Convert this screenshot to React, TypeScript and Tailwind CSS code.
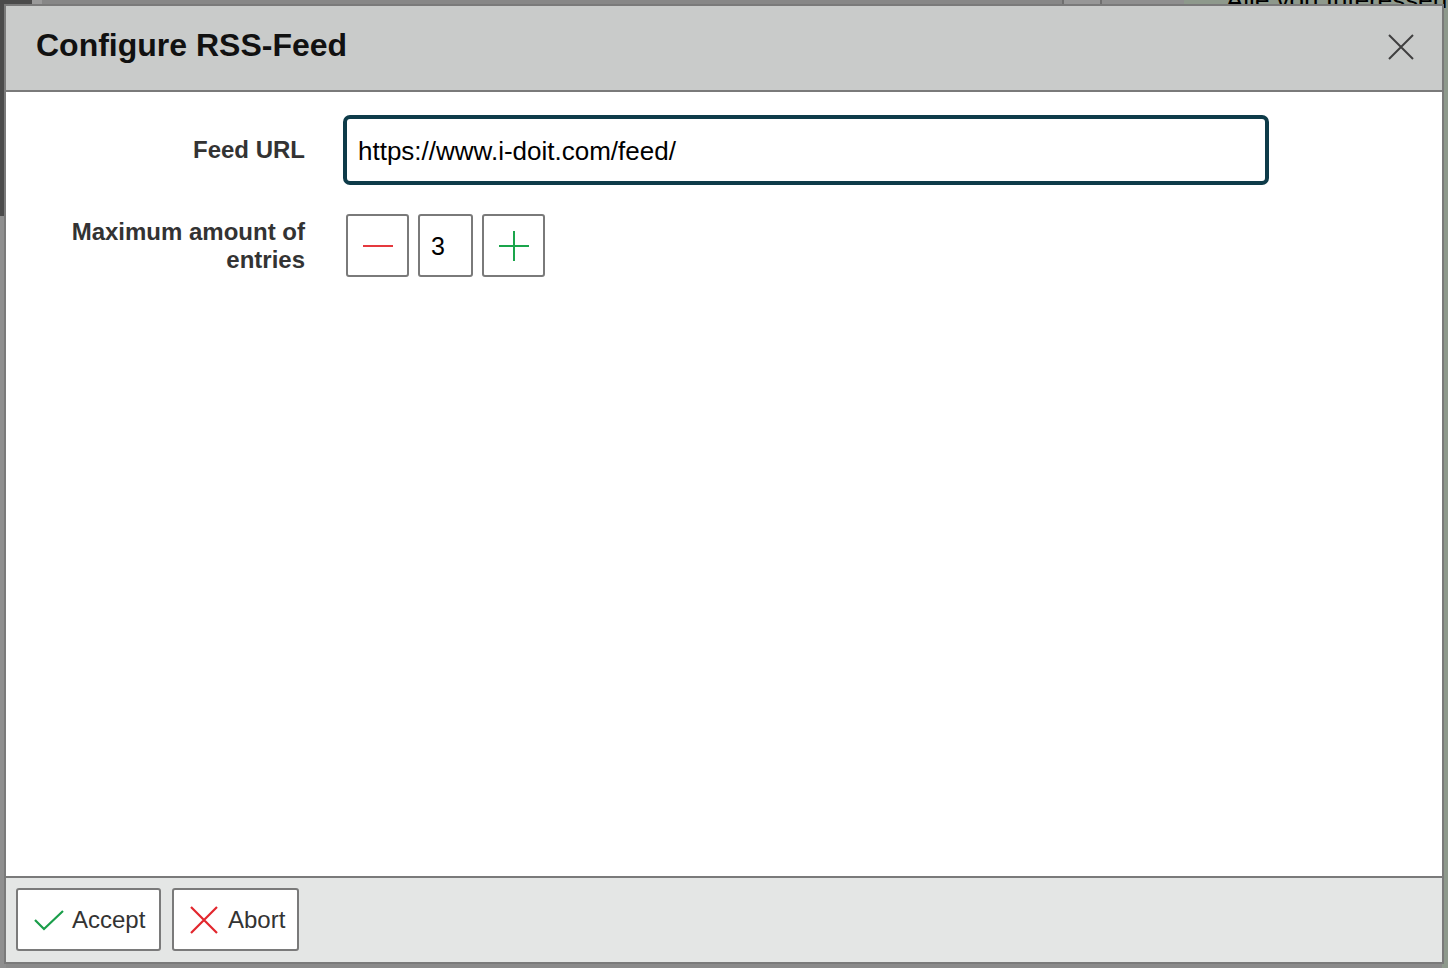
import React from "react";

function CloseIcon() {
  return (
    <svg width="26" height="26" viewBox="0 0 26 26" fill="none">
      <path d="M1 1 L25 25 M25 1 L1 25" stroke="#3f3f3f" strokeWidth="2" />
    </svg>
  );
}

function CheckIcon() {
  return (
    <svg width="30" height="22" viewBox="0 0 30 22" fill="none">
      <path d="M1 11 L10 20 L29 2" stroke="#1a9e4a" strokeWidth="2.2" />
    </svg>
  );
}

function CrossIcon() {
  return (
    <svg width="28" height="28" viewBox="0 0 28 28" fill="none">
      <path d="M1 1 L27 27 M27 1 L1 27" stroke="#e2262d" strokeWidth="2.2" />
    </svg>
  );
}

function Backdrop() {
  // page behind the dialog, dimmed
  return (
    <div className="absolute inset-0 flex flex-col bg-[#8a8a8a]">
      <div className="flex h-[8px]">
        <div className="w-[32px] bg-[#4b4b4b]" />
        <div className="w-[10px] bg-[#9a9a9a]" />
        <div className="w-[1020px] bg-[#878787]" />
        <div className="w-[40px] border-x-2 border-[#6f6f6f] bg-[#979797]" />
        <div className="w-[82px] bg-[#8f8f8f]" />
        <div className="flex-1 bg-[#8e998c] overflow-hidden pl-[42px]">
          <div className="text-[26px] leading-[20px] -mt-[10px] whitespace-nowrap text-black">
            Alle von Interessen
          </div>
        </div>
      </div>
      <div className="flex flex-1">
        <div className="w-[6px] flex flex-col">
          <div className="h-[208px] bg-[#4b4b4b]" />
          <div className="flex-1 bg-[#8f8f8f]" />
        </div>
        <div className="flex-1" />
        <div className="w-[6px] bg-[#8e998c]" />
      </div>
    </div>
  );
}

export default function App() {
  return (
    <div className="relative w-[1448px] h-[968px] overflow-hidden font-['Liberation_Sans',Arial,sans-serif]">
      <Backdrop />
      <div className="absolute left-[4px] top-[4px] w-[1440px] h-[960px] border-2 border-[#7a7a7a] bg-white flex flex-col">
        {/* header */}
        <div className="h-[86px] shrink-0 bg-[#c9cbca] border-b-2 border-[#7a7a7a] flex items-center justify-between pl-[30px] pr-[28px]">
          <h1 className="text-[32px] font-bold text-[#111] -mt-[7px]">Configure RSS-Feed</h1>
          <button className="-mt-[2px]">
            <CloseIcon />
          </button>
        </div>

        {/* body */}
        <div className="flex-1 pt-[23px]">
          <div className="grid grid-cols-[299px_1fr] gap-x-[38px] gap-y-[29px] items-start">
            <div className="h-[70px] flex items-center justify-end text-[24px] font-bold text-[#333]">
              Feed URL
            </div>
            <div>
              <div className="w-[926px] h-[70px] rounded-[7px] border-4 border-[#0e3b49] flex items-center pl-[11px] pt-[2px] text-[26px] text-black">
                https://www.i-doit.com/feed/
              </div>
            </div>

            <div className="pt-[4px] text-right text-[24px] leading-[28px] font-bold text-[#333]">
              Maximum amount of
              <br />
              entries
            </div>
            <div className="flex gap-[9px] pl-[3px]">
              <button className="w-[63px] h-[63px] rounded-[3px] border-2 border-[#7a7a7a] bg-white flex items-center justify-center">
                <span className="block w-[30px] h-[2px] bg-[#e5393e]" />
              </button>
              <div className="w-[55px] h-[63px] rounded-[3px] border-2 border-[#7a7a7a] bg-white flex items-center pl-[11px] pt-[3px] text-[25px] text-black">
                3
              </div>
              <button className="w-[63px] h-[63px] rounded-[3px] border-2 border-[#7a7a7a] bg-white flex items-center justify-center">
                <svg width="30" height="30" viewBox="0 0 30 30">
                  <path d="M15 0 V30 M0 15 H30" stroke="#1aa54b" strokeWidth="2" />
                </svg>
              </button>
            </div>
          </div>
        </div>

        {/* footer */}
        <div className="h-[86px] shrink-0 bg-[#e4e6e5] border-t-2 border-[#7a7a7a] flex items-start gap-[11px] pl-[10px] pt-[10px]">
          <button className="h-[63px] w-[145px] rounded-[3px] border-2 border-[#7a7a7a] bg-white flex items-center gap-[8px] pl-[16px] text-[24px] text-[#333]">
            <CheckIcon />
            <span>Accept</span>
          </button>
          <button className="h-[63px] w-[127px] rounded-[3px] border-2 border-[#7a7a7a] bg-white flex items-center gap-[10px] pl-[16px] text-[24px] text-[#333]">
            <CrossIcon />
            <span>Abort</span>
          </button>
        </div>
      </div>
    </div>
  );
}
